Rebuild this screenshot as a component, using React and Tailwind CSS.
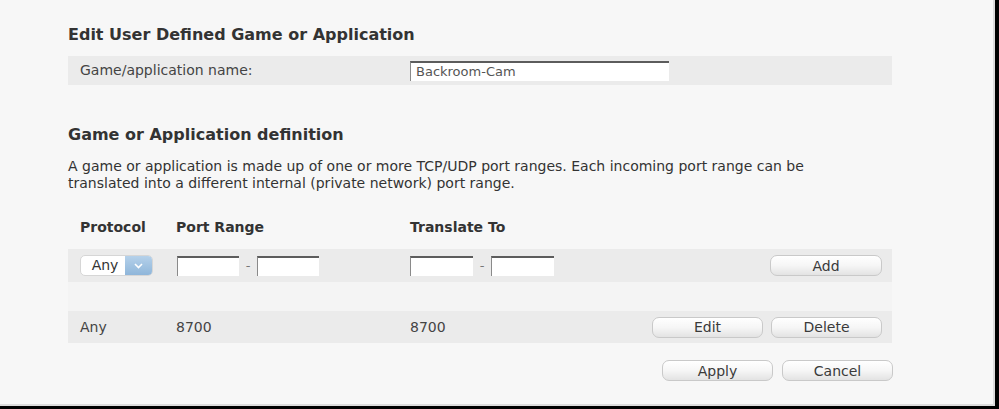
import React from 'react';

const font = { fontFamily: '"DejaVu Sans", Verdana, sans-serif' };

const GlossButton = ({ children, width = 'w-[111px]' }) => (
  <button
    type="button"
    className={`${width} h-[21px] rounded-[7px] border border-[#c9c9c9] bg-gradient-to-b from-white via-[#f6f6f6] to-[#e3e3e3] text-[14px] leading-none text-[#3a3a3a] shadow-[inset_0_1px_0_#fff]`}
  >
    {children}
  </button>
);

const TextBox = ({ width = 'w-[62px]', value = '' }) => (
  <div
    className={`${width} h-[20px] bg-white border-t-2 border-l border-t-[#5c5c5c] border-l-[#8a8a8a] text-[13px] text-[#555] pl-[5px] leading-[18px]`}
  >
    {value}
  </div>
);

const Dash = () => <span className="w-[18px] text-center text-[13px] text-[#777]">-</span>;

const ProtocolSelect = () => (
  <div className="flex h-[21px] w-[73px] rounded-[5px] overflow-hidden border border-[#d6d6d6] bg-white">
    <div className="flex-1 flex items-center justify-center text-[14px] text-[#333] pl-[4px]">Any</div>
    <div className="w-[27px] bg-gradient-to-b from-[#b5d1ea] to-[#8fb6da] flex items-center justify-center">
      <svg width="9" height="6" viewBox="0 0 9 6">
        <path d="M1 1 L4.5 4.5 L8 1" stroke="#fff" strokeWidth="1.6" fill="none" />
      </svg>
    </div>
  </div>
);

export default function App() {
  return (
    <div className="w-[999px] h-[409px] bg-black" style={font}>
      <div className="w-[995px] h-[406px] bg-[#f7f7f7] border-r-2 border-b-2 border-[#dcdcdc] pl-[68px] pr-[101px] pt-[24px] text-[#333]">
        <h2 className="text-[16px] font-bold text-[#333] leading-[22px]">Edit User Defined Game or Application</h2>
        <div className="mt-[10px] h-[29px] bg-[#ebebeb] flex items-center pl-[12px]">
          <span className="w-[330px] text-[14px] text-[#444]">Game/application name:</span>
          <TextBox width="w-[259px]" value="Backroom-Cam" />
        </div>

        <h2 className="mt-[39px] text-[16px] font-bold text-[#333] leading-[22px]">Game or Application definition</h2>
        <p className="mt-[12px] text-[14px] leading-[17px] text-[#333] w-[770px]">
          A game or application is made up of one or more TCP/UDP port ranges. Each incoming port range can be translated into a different internal (private network) port range.
        </p>

        <div className="mt-[25px] flex items-center pl-[12px] h-[20px] text-[14px] font-bold text-[#333]">
          <span className="w-[96px]">Protocol</span>
          <span className="w-[234px]">Port Range</span>
          <span>Translate To</span>
        </div>

        <div className="mt-[12px] h-[33px] bg-[#ebebeb] flex items-center pl-[12px] pr-[10px]">
          <div className="w-[97px]">
            <ProtocolSelect />
          </div>
          <div className="w-[233px] flex items-center">
            <TextBox />
            <Dash />
            <TextBox />
          </div>
          <div className="flex items-center">
            <TextBox width="w-[63px]" />
            <Dash />
            <TextBox width="w-[63px]" />
          </div>
          <div className="ml-auto">
            <GlossButton width="w-[112px]">Add</GlossButton>
          </div>
        </div>

        <div className="h-[29px] bg-[#f4f4f4]" />

        <div className="h-[32px] bg-[#ebebeb] flex items-center pl-[12px] pr-[10px] text-[14px] text-[#444]">
          <span className="w-[96px]">Any</span>
          <span className="w-[234px]">8700</span>
          <span>8700</span>
          <div className="ml-auto flex gap-[8px]">
            <GlossButton>Edit</GlossButton>
            <GlossButton>Delete</GlossButton>
          </div>
        </div>

        <div className="mt-[17px] flex justify-end gap-[9px] -mr-[1px]">
          <GlossButton>Apply</GlossButton>
          <GlossButton>Cancel</GlossButton>
        </div>
      </div>
    </div>
  );
}
